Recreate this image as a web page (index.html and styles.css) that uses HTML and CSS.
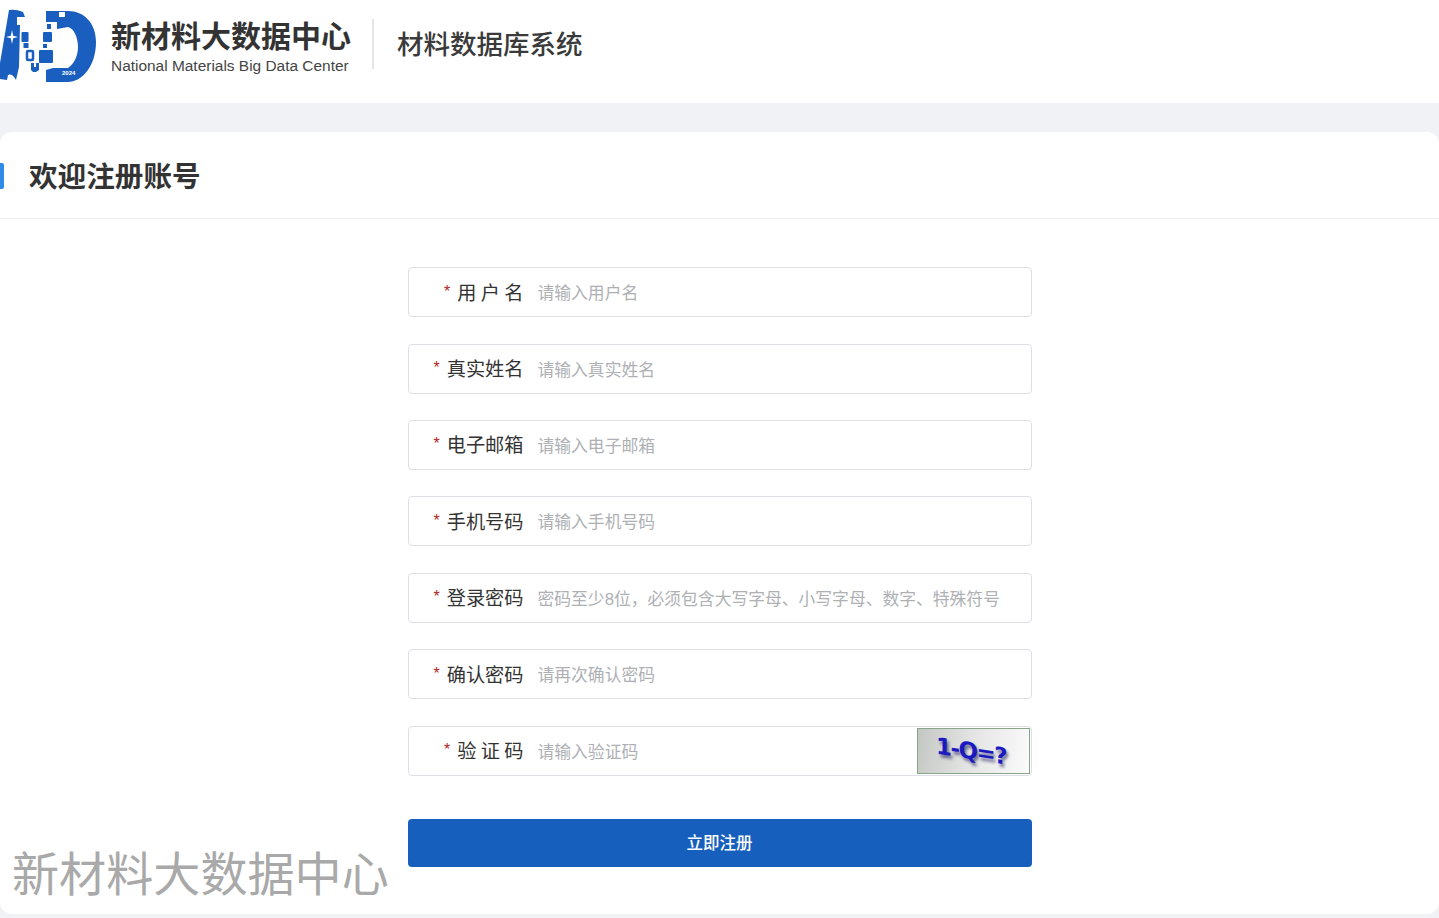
FILE: index.html
```html
<!DOCTYPE html>
<html lang="zh-CN">
<head>
<meta charset="utf-8">
<title>欢迎注册账号</title>
<link rel="stylesheet" href="styles.css">
</head>
<body>
<header class="top">
  <svg class="logo" viewBox="0 0 100 90" width="100" height="90" aria-hidden="true">
    <path fill="#1a5fbf" d="M9 10 Q16 9 23 12 L25 17 L17 17 L17 25 L20 25 L19 67 L16 80 Q12 73 8 75 L7 80 L0 79 L0 63 Z"/>
    <path fill="#fff" d="M12 30 L13.200 35.800 L18 37 L13.200 38.200 L12 44 L10.800 38.200 L6 37 L10.800 35.800 Z"/>
    <path fill="#1a5fbf" fill-rule="evenodd" d="M46 11 H68 C84 11 96 23 96 42 C96 66 82 82 68 82 H46 V70 L53 68 H68 C74 64 78 56 78 47 C78 36 73 28 68 27 L57 29 V22 H46 Z M59 12 V17 H65 V12 Z"/>
    <rect fill="#1a5fbf" x="43" y="32" width="9" height="10" rx="1"/>
    <rect fill="#1a5fbf" x="47" y="24" width="4" height="5"/>
    <rect fill="#1a5fbf" x="43" y="44" width="4" height="4"/>
    <rect fill="#1a5fbf" x="39" y="50" width="14" height="13" rx="1"/>
    <rect fill="#1a5fbf" x="21.500" y="32" width="7" height="10" rx="1"/>
    <rect fill="#1a5fbf" x="23.500" y="43" width="5" height="5"/>
    <rect fill="none" stroke="#1a5fbf" stroke-width="2.500" x="27" y="51" width="6" height="9" rx="1"/>
    <path fill="#1a5fbf" d="M31 63 H34 V67 H36 V63 H39 V70 L36 72 H33 L31 70 Z"/>
    <text class="logo-year" x="62" y="75">2024</text>
  </svg>
  <div class="brand">
    <div class="brand-cn">新材料大数据中心</div>
    <div class="brand-en">National Materials Big Data Center</div>
  </div>
  <div class="sep"></div>
  <div class="system">材料数据库系统</div>
</header>

<main class="card">
  <h1 class="card-title">欢迎注册账号</h1>
  <form class="form">
    <label class="row"><span class="label"><i>*</i>用 户 名</span><input class="field" placeholder="请输入用户名"></label>
    <label class="row"><span class="label"><i>*</i>真实姓名</span><input class="field" placeholder="请输入真实姓名"></label>
    <label class="row"><span class="label"><i>*</i>电子邮箱</span><input class="field" placeholder="请输入电子邮箱"></label>
    <label class="row"><span class="label"><i>*</i>手机号码</span><input class="field" placeholder="请输入手机号码"></label>
    <label class="row"><span class="label"><i>*</i>登录密码</span><input class="field" placeholder="密码至少8位，必须包含大写字母、小写字母、数字、特殊符号"></label>
    <label class="row"><span class="label"><i>*</i>确认密码</span><input class="field" placeholder="请再次确认密码"></label>
    <label class="row"><span class="label"><i>*</i>验 证 码</span><input class="field" placeholder="请输入验证码"><span class="captcha"><span class="captcha-text">1-Q=?</span></span></label>
    <button class="submit" type="button">立即注册</button>
  </form>
  <div class="watermark">新材料大数据中心</div>
</main>
</body>
</html>
```

FILE: styles.css
```css
* { box-sizing: border-box; }
html, body { margin: 0; height: 100%; overflow: hidden; }
body {
  background: #f0f2f5;
  color: #333;
  font-family: "Liberation Sans", "Noto Sans CJK SC", sans-serif;
}
.top {
  height: 103px;
  background: #fff;
  display: flex;
  align-items: flex-start;
}
.logo { flex: none; width: 100px; height: 90px; margin-right: 11px; }
.logo-year { font: bold 6px "Liberation Sans", sans-serif; fill: #fff; }
.brand { width: 240px; padding-top: 19px; }
.brand-cn {
  font-size: 30px;
  line-height: 36px;
  font-weight: 700;
  color: #333;
  white-space: nowrap;
}
.brand-en {
  font-size: 15.450px;
  line-height: 18px;
  margin-top: 2px;
  color: #444;
  white-space: nowrap;
}
.sep { width: 2px; height: 50px; background: #e6e6e6; margin: 19px 23px 0 21px; flex: none; }
.system { font-size: 26.500px; line-height: 38px; font-weight: 500; color: #3a3a3a; white-space: nowrap; margin-top: 26px; }

.card {
  position: relative;
  margin-top: 29px;
  height: 782px;
  background: #fff;
  border-radius: 12px;
}
.card-title {
  margin: 0;
  height: 87px;
  padding: 0 0 2px 29px;
  display: flex;
  align-items: center;
  font-size: 28.600px;
  font-weight: 700;
  color: #333;
  border-bottom: 1px solid #f0f0f0;
  position: relative;
}
.card-title::before {
  content: "";
  position: absolute;
  left: 0;
  top: 31px;
  width: 4px;
  height: 26px;
  background: #2f8be6;
  border-radius: 0 2px 2px 0;
}
.form {
  width: 624px;
  margin: 48.200px auto 0;
  display: flex;
  flex-direction: column;
  gap: 26.400px;
}
.row {
  height: 50px;
  border: 1px solid #dcdfe6;
  border-radius: 4px;
  display: flex;
  align-items: center;
  background: #fff;
}
.label {
  flex: none;
  width: 115px;
  text-align: right;
  font-size: 19.200px;
  word-spacing: -1px;
  color: #333;
  white-space: nowrap;
  padding-bottom: 1px;
}
.label i {
  font-style: normal;
  color: #b3261e;
  font-size: 16px;
  margin-right: 7px;
  position: relative;
  top: -3px;
}
.field {
  flex: 1;
  min-width: 0;
  height: 100%;
  border: 0;
  outline: 0;
  background: transparent;
  padding: 4px 0 0 14px;
  font-family: inherit;
  font-size: 16.800px;
  color: #333;
}
.field::placeholder { color: #aeb0b4; opacity: 1; }
.captcha {
  flex: none;
  width: 113px;
  height: 46px;
  margin-right: 1px;
  border: 1px solid #8aa58a;
  background: linear-gradient(100deg, #c3c7c3 0%, #e2e3e2 45%, #fbfbfb 100%);
  display: flex;
  align-items: center;
  justify-content: center;
  overflow: hidden;
}
.captcha-text {
  font-family: "DejaVu Sans", sans-serif;
  font-size: 23px;
  font-weight: 700;
  color: #1a1ac0;
  letter-spacing: -1.500px;
  text-shadow: 2px 3px 3px rgba(30, 30, 90, .6);
  transform: skewY(9deg);
  margin-right: 4px;
}
.submit {
  height: 48px;
  margin-top: 17px;
  padding: 0 0 2px;
  border: 0;
  border-radius: 4px;
  background: #175fbd;
  color: #fff;
  font-family: inherit;
  font-size: 16.500px;
  font-weight: 500;
}
.watermark {
  position: absolute;
  left: 12px;
  bottom: 7px;
  font-size: 47.100px;
  line-height: 64px;
  color: #a9a9a9;
  white-space: nowrap;
  pointer-events: none;
}
```
